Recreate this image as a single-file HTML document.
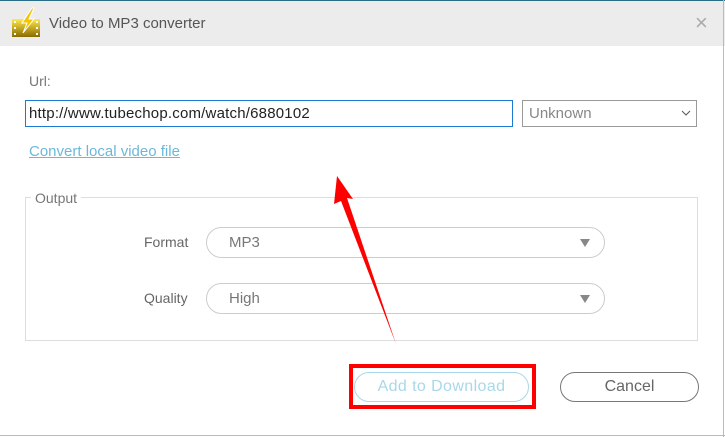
<!DOCTYPE html>
<html><head><style>
body{margin:0;width:725px;height:437px;overflow:hidden;background:#fff;font-family:"Liberation Sans",sans-serif;position:relative}
.a{position:absolute}
.t{font-size:14px;color:#555}
</style></head><body>
<div class="a" style="left:0;top:0;width:725px;height:46px;background:#ececec;border-top:1px solid #2a6f8a;box-sizing:border-box"></div>
<svg class="a" style="left:10px;top:7px" width="32" height="32" viewBox="0 0 32 32">
<defs><linearGradient id="g" x1="0" y1="0" x2="0" y2="1"><stop offset="0" stop-color="#ffe94a"/><stop offset="1" stop-color="#8a6a00"/></linearGradient></defs>
<rect x="2" y="12" width="28" height="18" fill="url(#g)"/>
<rect x="4" y="14" width="2" height="2" fill="#fff"/><rect x="4" y="20" width="2" height="2" fill="#fff"/><rect x="4" y="26" width="2" height="2" fill="#fff"/>
<rect x="26" y="14" width="2" height="2" fill="#fff"/><rect x="26" y="20" width="2" height="2" fill="#fff"/><rect x="26" y="26" width="2" height="2" fill="#fff"/>
<path d="M22 1 L12 16 L17 16 L13 26 L24 12 L19 12 L24 1Z" fill="#f5c400" stroke="#fff" stroke-width="1"/>
</svg>
<div class="a" style="left:49px;top:15px;font-size:15px;color:#555">Video to MP3 converter</div>
<div class="a" style="left:695px;top:10px;font-size:22px;color:#aaa">×</div>
<div class="a t" style="left:29px;top:73px;color:#777">Url:</div>
<div class="a" style="left:25px;top:100px;width:488px;height:27px;border:1px solid #1a7ad4;box-sizing:border-box;font-size:15px;color:#222;padding:4px 0 0 3px;letter-spacing:0.2px">http://www.tubechop.com/watch/6880102</div>
<div class="a" style="left:522px;top:100px;width:175px;height:27px;border:1px solid #999;box-sizing:border-box;font-size:15px;color:#888;padding:4px 0 0 6px">Unknown<svg style="position:absolute;right:5px;top:9px" width="10" height="6"><path d="M1 1L5 5L9 1" stroke="#555" fill="none"/></svg></div>
<div class="a" style="left:29px;top:143px;font-size:15px;color:#6cb8d8;text-decoration:underline">Convert local video file</div>
<div class="a" style="left:25px;top:197px;width:673px;height:144px;border:1px solid #ddd;box-sizing:border-box"></div>
<div class="a t" style="left:31px;top:190px;background:#fff;padding:0 4px;color:#777">Output</div>
<div class="a t" style="left:144px;top:234px;color:#666">Format</div>
<div class="a t" style="left:144px;top:290px;color:#666">Quality</div>
<div class="a" style="left:206px;top:227px;width:399px;height:31px;border:1px solid #ccc;border-radius:16px;box-sizing:border-box;font-size:15px;color:#777;padding:6px 0 0 22px">MP3<svg style="position:absolute;right:14px;top:11px" width="10" height="8"><path d="M0 0H10L5 8Z" fill="#888"/></svg></div>
<div class="a" style="left:206px;top:283px;width:399px;height:31px;border:1px solid #ccc;border-radius:16px;box-sizing:border-box;font-size:15px;color:#777;padding:6px 0 0 22px">High<svg style="position:absolute;right:14px;top:11px" width="10" height="8"><path d="M0 0H10L5 8Z" fill="#888"/></svg></div>
<div class="a" style="left:349px;top:364px;width:187px;height:45px;border:4px solid #f00;box-sizing:border-box"></div>
<div class="a" style="left:354px;top:372px;width:175px;height:30px;border:1px solid #a8d8ea;border-radius:15px;box-sizing:border-box;font-size:16px;color:#a8d8ea;text-align:center;line-height:28px;letter-spacing:0.4px">Add to Download</div>
<div class="a" style="left:560px;top:372px;width:139px;height:30px;border:1px solid #777;border-radius:15px;box-sizing:border-box;font-size:16px;color:#666;text-align:center;line-height:28px">Cancel</div>
<svg class="a" style="left:0;top:0" width="725" height="437">
<polygon points="337,176 353,199 347,198 396,344 341,201 334,204" fill="#f00"/>
</svg>
<div class="a" style="left:723px;top:0;width:1px;height:437px;background:#bbb"></div>
<div class="a" style="left:0;top:435px;width:725px;height:1px;background:#bbb"></div>
</body></html>
